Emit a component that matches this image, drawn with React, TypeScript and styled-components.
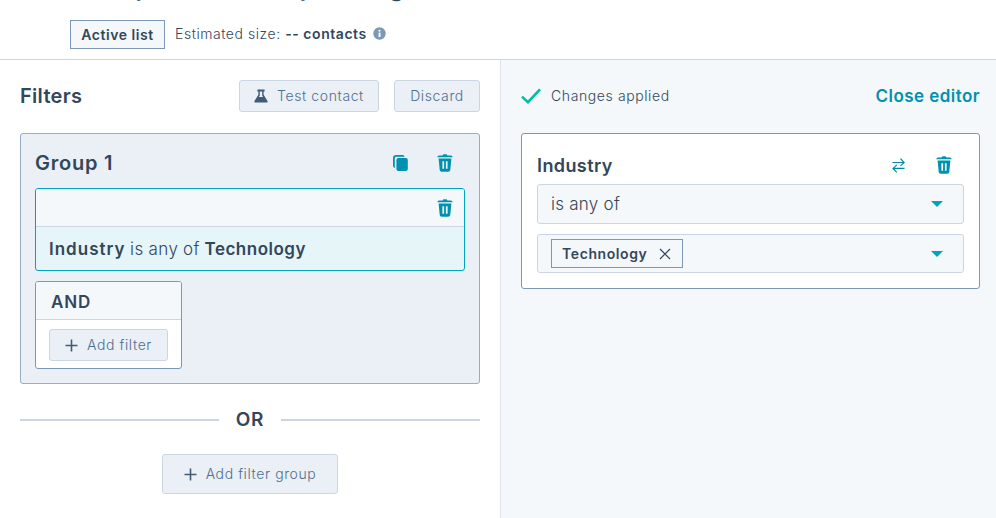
import React from "react";
import styled, { createGlobalStyle } from "styled-components";

const Global = createGlobalStyle`
  html, body { margin: 0; padding: 0; background: #fff; }
  body { font-family: Inter, "Open Sans", "Liberation Sans", sans-serif; color: #33475b; overflow: hidden; }
  * { box-sizing: border-box; }
`;

const Page = styled.div`
  width: 996px;
  height: 518px;
  display: flex;
  flex-direction: column;
  overflow: hidden;
`;
const Header = styled.header`
  height: 60px;
  flex: none;
  border-bottom: 1px solid #cbd6e2;
  padding-left: 70px;
  overflow: hidden;
`;
const Title = styled.h1`
  margin: -27px 0 17px;
  height: 30px;
  font-size: 24px;
  line-height: 30px;
  font-weight: 600;
  letter-spacing: 0.5px;
  white-space: nowrap;
`;
const Meta = styled.div`
  display: flex;
  align-items: center;
  height: 29px;
`;
const ListTag = styled.span`
  height: 29px;
  width: 95px;
  display: flex;
  align-items: center;
  justify-content: center;
  padding-bottom: 1px;
  border: 1px solid #7c98b6;
  background: #f5f8fa;
  font-size: 14px;
  font-weight: 600;
  letter-spacing: 0.55px;
  margin-right: 10px;
`;
const MetaText = styled.span`
  font-size: 14px;
  font-weight: 300;
  letter-spacing: 0.55px;
  color: #33475b;
  margin-top: -2px;
  b { font-weight: 600; }
`;
const InfoIcon = styled.svg`
  width: 13px;
  height: 13px;
  margin: -2px 0 0 6px;
`;
const Columns = styled.main`
  flex: 1;
  display: flex;
  min-height: 0;
`;
const LeftPane = styled.section`
  width: 501px;
  flex: none;
  padding: 20px 20px 0;
  border-right: 1px solid #dfe3eb;
`;
const RightPane = styled.section`
  flex: 1;
  background: #f5f8fa;
  padding: 20px 16px 0 20px;
`;
const PaneHead = styled.div`
  display: flex;
  align-items: center;
  height: 32px;
  margin-bottom: 21px;
`;
const PaneTitle = styled.h2`
  margin: 0 auto 0 0;
  font-size: 20px;
  font-weight: 600;
  letter-spacing: 0.3px;
`;
const Button = styled.button<{ $w: number; $h?: number }>`
  width: ${(p) => p.$w}px;
  height: ${(p) => p.$h ?? 32}px;
  flex: none;
  display: inline-flex;
  align-items: center;
  justify-content: center;
  gap: 9px;
  padding: 0;
  border: 1px solid #cbd6e2;
  border-radius: 3px;
  background: #eaf0f6;
  color: #506e91;
  font-family: inherit;
  font-size: 14px;
  font-weight: 300;
  letter-spacing: 0.6px;
`;
const ButtonLabel = styled.span`
  margin-top: -2px;
`;
const Discard = styled(Button)`
  margin-left: 15px;
`;
const Group = styled.div`
  height: 251px;
  background: #eaf0f6;
  border: 1px solid #99acc2;
  border-radius: 3px;
  padding: 0 14px;
`;
const RowHead = styled.div`
  height: 54px;
  padding-top: 4px;
  display: flex;
  align-items: center;
`;
const GroupTitle = styled.h3`
  margin: 0 auto 0 0;
  font-size: 20px;
  font-weight: 600;
  letter-spacing: 0.75px;
`;
const IconSlot = styled.span<{ $gap?: number }>`
  display: flex;
  margin-left: ${(p) => p.$gap ?? 0}px;
`;
const FilterCard = styled.div`
  height: 83px;
  border: 1px solid #00a4bd;
  border-radius: 3px;
  overflow: hidden;
  background: #e5f5f8;
`;
const FilterTop = styled.div`
  height: 38px;
  background: #f5f8fa;
  border-bottom: 1px solid #cbd6e2;
  display: flex;
  align-items: center;
  justify-content: flex-end;
  padding-right: 11px;
`;
const FilterBody = styled.div`
  height: 43px;
  display: flex;
  align-items: center;
  padding-left: 13px;
  font-size: 17px;
  font-weight: 300;
  letter-spacing: 0.5px;
  word-spacing: -0.7px;
  b { font-weight: 600; }
  b:first-child { letter-spacing: 1px; }
`;
const AndCard = styled.div`
  margin-top: 10px;
  width: 147px;
  height: 88px;
  background: #fff;
  border: 1px solid #7c98b6;
  border-radius: 3px;
  overflow: hidden;
`;
const AndHead = styled.div`
  height: 38px;
  background: #f5f8fa;
  border-bottom: 1px solid #cbd6e2;
  display: flex;
  align-items: center;
  padding: 3px 0 0 15px;
  font-size: 17px;
  font-weight: 600;
  letter-spacing: 0.8px;
`;
const AndBody = styled.div`
  padding: 9px 13px;
`;
const Divider = styled.div`
  margin-top: 25px;
  display: flex;
  align-items: center;
  gap: 17px;
  height: 22px;
  font-size: 19px;
  font-weight: 600;
  letter-spacing: 0.8px;
  &::before, &::after {
    content: "";
    flex: 1;
    height: 2px;
    background: #cbd6e2;
  }
`;
const Center = styled.div`
  display: flex;
  justify-content: center;
  margin-top: 23px;
`;
const Status = styled.div`
  margin-right: auto;
  display: flex;
  align-items: center;
  gap: 10px;
  font-size: 14px;
  font-weight: 300;
  letter-spacing: 0.6px;
`;
const CloseLink = styled.a`
  color: #0091ae;
  font-size: 17px;
  font-weight: 600;
  letter-spacing: 0.45px;
`;
const EditorCard = styled.div`
  height: 156px;
  background: #fff;
  border: 1px solid #7c98b6;
  border-radius: 3px;
  padding: 0 15px;
`;
const EditorHead = styled.div`
  height: 50px;
  padding-top: 12px;
  display: flex;
  align-items: center;
`;
const EditorTitle = styled.h3`
  margin: 0 auto 0 0;
  font-size: 18px;
  font-weight: 600;
  letter-spacing: 0.4px;
`;
const Select = styled.div<{ $h: number }>`
  height: ${(p) => p.$h}px;
  margin-bottom: 10px;
  display: flex;
  align-items: center;
  justify-content: space-between;
  padding: 0 20px 0 13px;
  background: #f5f8fa;
  border: 1px solid #cbd6e2;
  border-radius: 3px;
  font-size: 17px;
  font-weight: 300;
  letter-spacing: 0.25px;
`;
const Caret = styled.span`
  width: 0;
  height: 0;
  border-left: 6px solid transparent;
  border-right: 6px solid transparent;
  border-top: 6px solid #00a4bd;
`;
const Chip = styled.span`
  width: 132px;
  height: 29px;
  display: flex;
  align-items: center;
  gap: 12px;
  padding-left: 10px;
  background: #f5f8fa;
  border: 1px solid #7c98b6;
  font-size: 14px;
  font-weight: 600;
  letter-spacing: 0.6px;
`;

const Trash = () => (
  <svg width="16" height="18" viewBox="0 0 16 18" fill="#0091ae">
    <path d="M5.6 1.6C5.8.7 6.5.2 7.3.2h1.4c.8 0 1.5.5 1.7 1.4h3.2c.9 0 1.8.5 2.2 1.7H.2c.4-1.2 1.3-1.7 2.2-1.7z" />
    <path fillRule="evenodd" d="M1.6 4.6h12.8l-1.1 11.2c-.1 1.2-1 2-2.1 2H4.8c-1.1 0-2-.8-2.1-2zM5.4 7.2v7.6h1.7V7.2zm3.5 0v7.6h1.7V7.2z" />
  </svg>
);
const Copy = () => (
  <svg width="15" height="16" viewBox="0 0 15 16" fill="#0091ae">
    <rect x="3.4" y="3" width="11.4" height="13" rx="2" />
    <path d="M2.4 13.2C1 13 0 12 0 10.6V3a3 3 0 0 1 3-3h6.4c1.2 0 2 .7 2.2 1.7H3.4c-.9 0-1.6.7-1.6 1.6v8.4c0 .6.2 1.1.6 1.5z" />
  </svg>
);
const Swap = () => (
  <svg width="13" height="15" viewBox="0 0 13 15" fill="none" stroke="#0089a3" strokeWidth="1.15">
    <path d="M.5 4.5h11.5M8.4.6l3.8 3.9-3.8 3.4" />
    <path d="M12.5 10.4H1M4.8 6.8 1 10.4l3.8 3.9" />
  </svg>
);
const Flask = () => (
  <svg width="14" height="14" viewBox="0 0 14 14" fill="#425b76">
    <path d="M3.4.6h7.2v1.8H9.6v3.4l3.9 6.2c.4.8 0 1.6-.9 1.6H1.4c-.9 0-1.3-.8-.9-1.6l3.9-6.2V2.4h-1zM5.8 2.4v4L4.6 8.4h4.8L8.2 6.4v-4z" />
    <path d="M3.6 8h6.8l2 4.6H1.6z" />
  </svg>
);
const Plus = () => (
  <svg width="13" height="13" viewBox="0 0 13 13" stroke="#425b76" strokeWidth="1.6">
    <path d="M6.5.5v12M.5 6.5h12" />
  </svg>
);
const Check = () => (
  <svg width="20" height="16" viewBox="0 0 20 16" fill="none" stroke="#00bda5" strokeWidth="2.6">
    <path d="M1 8.6 7 14.2 19 1.4" />
  </svg>
);
const Cross = () => (
  <svg width="12" height="12" viewBox="0 0 12 12" stroke="#33475b" strokeWidth="1.2">
    <path d="M1 1l10 10M11 1 1 11" />
  </svg>
);

export default function App() {
  return (
    <Page>
      <Global />
      <Header>
        <Title>Example Tech Compute Org</Title>
        <Meta>
          <ListTag>Active list</ListTag>
          <MetaText>
            Estimated size: <b>-- contacts</b>
          </MetaText>
          <InfoIcon viewBox="0 0 13 13">
            <circle cx="6.5" cy="6.5" r="6.2" fill="#7c98b6" />
            <rect x="5.6" y="5.6" width="1.9" height="4.4" fill="#fff" />
            <circle cx="6.5" cy="3.8" r="1.05" fill="#fff" />
          </InfoIcon>
        </Meta>
      </Header>
      <Columns>
        <LeftPane>
          <PaneHead>
            <PaneTitle>Filters</PaneTitle>
            <Button $w={140}>
              <Flask />
              <ButtonLabel>Test contact</ButtonLabel>
            </Button>
            <Discard $w={86}>
              <ButtonLabel>Discard</ButtonLabel>
            </Discard>
          </PaneHead>
          <Group>
            <RowHead>
              <GroupTitle>Group 1</GroupTitle>
              <Copy />
              <IconSlot $gap={29}>
                <Trash />
              </IconSlot>
              <IconSlot $gap={12} />
            </RowHead>
            <FilterCard>
              <FilterTop>
                <Trash />
              </FilterTop>
              <FilterBody>
                <span>
                  <b>Industry</b> is any of <b>Technology</b>
                </span>
              </FilterBody>
            </FilterCard>
            <AndCard>
              <AndHead>AND</AndHead>
              <AndBody>
                <Button $w={119}>
                  <Plus />
                  <ButtonLabel>Add filter</ButtonLabel>
                </Button>
              </AndBody>
            </AndCard>
          </Group>
          <Divider>
            <ButtonLabel>OR</ButtonLabel>
          </Divider>
          <Center>
            <Button $w={176} $h={40}>
              <Plus />
              <ButtonLabel>Add filter group</ButtonLabel>
            </Button>
          </Center>
        </LeftPane>
        <RightPane>
          <PaneHead>
            <Status>
              <Check />
              <ButtonLabel>Changes applied</ButtonLabel>
            </Status>
            <CloseLink>Close editor</CloseLink>
          </PaneHead>
          <EditorCard>
            <EditorHead>
              <EditorTitle>Industry</EditorTitle>
              <Swap />
              <IconSlot $gap={31}>
                <Trash />
              </IconSlot>
              <IconSlot $gap={12} />
            </EditorHead>
            <Select $h={40}>
              is any of
              <Caret />
            </Select>
            <Select $h={39}>
              <Chip>
                Technology
                <Cross />
              </Chip>
              <Caret />
            </Select>
          </EditorCard>
        </RightPane>
      </Columns>
    </Page>
  );
}
